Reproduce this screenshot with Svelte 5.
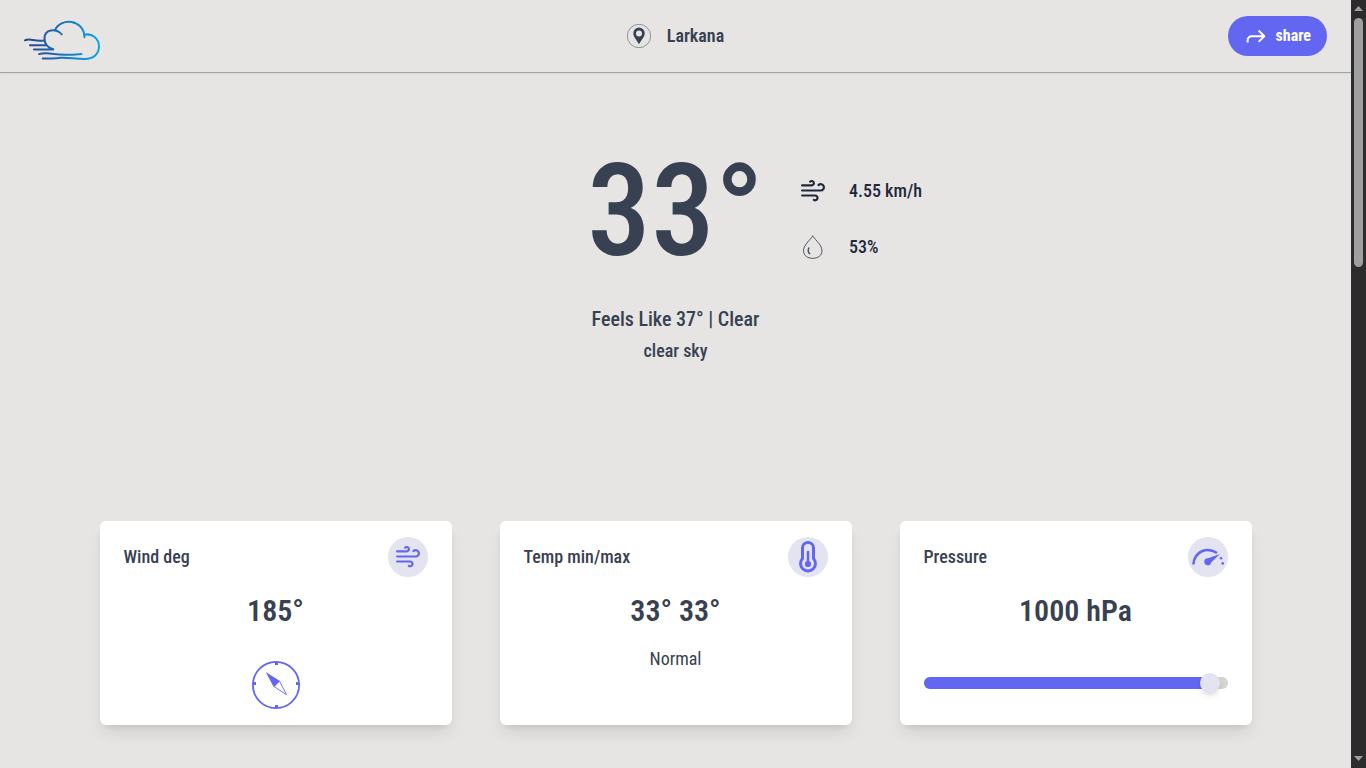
<script>
  const cards = [
    { title: 'Wind deg', value: '185°', icon: 'wind' },
    { title: 'Temp min/max', value: '33° 33°', icon: 'temp' },
    { title: 'Pressure', value: '1000 hPa', icon: 'gauge' }
  ];
  const level = 94.2;
</script>

{#snippet wind(size)}
  <svg width={size} height={size} viewBox="0 0 24 24" fill="none" stroke="currentColor" stroke-width="2.2" stroke-linecap="round" stroke-linejoin="round">
    <path d="M1.100 6.400h9.500a2.200 2.200 0 1 0-1.500-3.700" />
    <path d="M1.100 11.500h18.600a3.150 3.150 0 1 0-2.200-5.400" />
    <path d="M1.100 16.500h12.700a2.400 2.400 0 1 1-1 4.400" />
  </svg>
{/snippet}

<div class="window">
  <div class="page">
    <header>
      <div class="side">
        <svg class="logo" width="78" height="40" viewBox="0 0 78 40" fill="none" stroke="url(#sky)" stroke-width="2" stroke-linecap="round">
          <defs>
            <linearGradient id="sky" gradientUnits="userSpaceOnUse" x1="0" y1="0" x2="76" y2="0">
              <stop offset="0" stop-color="#293d90" />
              <stop offset="0.5" stop-color="#1c72bb" />
              <stop offset="1" stop-color="#05a9e8" />
            </linearGradient>
          </defs>
          <path d="M1 20.300c5-2.500 9 1.500 19 .2" />
          <path d="M6 25.200h15.500" />
          <path d="M10 29.400h20c-5-1.200-9.500-4.500-9.500-11 0-9 11-10.500 17.300-4" />
          <path d="M31 10.300c5-12.700 29-11.700 29.500 7" />
          <path d="M60.500 14.800c7.500-2 14.500 4 14.500 11.500 0 7.500-5.300 12.700-14.300 12.700-10 0-16-1.600-24-1.200-5 .3-9 1.200-18 .7" />
          <path d="M15 34.100c5-1.300 10-.8 15 0 9 1.400 18 .8 27.500-.2" />
        </svg>
      </div>
      <div class="place">
        <svg width="24" height="24" viewBox="0 0 24 24">
          <circle cx="12" cy="12" r="11.700" fill="none" stroke="#374151" stroke-width=".5" />
          <path fill="#374151" fill-rule="evenodd" d="M12 3.500a5.700 5.700 0 0 0-5.700 5.700c0 4 3.300 6.500 5.700 11 2.400-4.500 5.700-7 5.700-11A5.700 5.700 0 0 0 12 3.500zm0 2.900a3 3 0 1 1 0 6 3 3 0 0 1 0-6z" />
        </svg>
        <span>Larkana</span>
      </div>
      <div class="side end">
        <button>
          <svg width="24" height="24" viewBox="0 0 24 24" fill="none" stroke="currentColor" stroke-width="2" stroke-linejoin="round">
            <path d="M3.600 18.500v-2.300a4 4 0 0 1 4-4H20" />
            <path d="M14.600 6.500l5.700 5.700-5.700 5.700" />
          </svg>
          <span>share</span>
        </button>
      </div>
    </header>

    <main>
      <section class="now">
        <div class="reading">
          <h1>33°</h1>
          <ul>
            <li>{@render wind(24)}<span>4.55 km/h</span></li>
            <li>
              <svg width="24" height="24" viewBox="0 0 24 24" fill="none" stroke="#4b5563" stroke-width="1" stroke-linecap="round">
                <path d="M11.700 1.200C8.300 5.700 2.500 10.500 2.500 15.700c0 5 4.200 7.600 9.300 7.600s9.200-2.800 9.200-7.600c0-5.200-5.700-10-9.300-14.500z" />
                <path d="M7.800 13c-.9 2-.7 4.200.9 5.800" stroke-width="1.500" />
              </svg>
              <span>53%</span>
            </li>
          </ul>
        </div>
        <p class="feels">Feels Like 37° | Clear</p>
        <p class="sky">clear sky</p>
      </section>

      <section class="cards">
        {#each cards as card}
          <article>
            <div class="top">
              <h2>{card.title}</h2>
              <div class="badge">
                {#if card.icon === 'wind'}
                  {@render wind(24)}
                {:else if card.icon === 'temp'}
                  <svg width="32" height="32" viewBox="0 0 32 32" fill="none" stroke="currentColor">
                    <path stroke-width="3" d="M10.500 17.500V7a5.500 5.500 0 0 1 11 0v10.500c1.500 1.600 2 3.300 2 5a7.500 7.500 0 0 1-15 0c0-1.700.5-3.400 2-5z" />
                    <path stroke-width="2.600" stroke-linecap="round" d="M16 11v11" />
                    <circle cx="16" cy="23" r="3.100" fill="currentColor" stroke="none" />
                  </svg>
                {:else}
                  <svg width="32" height="32" viewBox="0 0 32 32" fill="none" stroke="currentColor">
                    <path stroke-width="2.600" d="M1.300 23.500C2.500 10 15 5.500 25 12" />
                    <path fill="currentColor" stroke="none" d="M28 13l-8.800 8.400a3.500 3.500 0 1 1-3.200-4.200z" />
                    <g fill="currentColor" stroke="none">
                      <circle cx="29" cy="17.200" r="1.300" />
                      <circle cx="30.700" cy="22.400" r="1.300" />
                    </g>
                  </svg>
                {/if}
              </div>
            </div>
            <strong>{card.value}</strong>
            {#if card.icon === 'wind'}
              <svg class="compass" width="48" height="48" viewBox="0 0 48 48" fill="none" stroke="currentColor">
                <circle cx="24" cy="24" r="23.100" stroke-width="1.800" />
                <path stroke-width="3" d="M24.500 1v3M24.500 44v3M1 22.500h3M44 22.500h3" />
                <path fill="currentColor" stroke="none" d="M13.700 11l14.300 9-6.300 6z" />
                <path stroke-width=".9" d="M27.500 20l7 13.700L22 25.500z" />
              </svg>
            {:else if card.icon === 'temp'}
              <p>Normal</p>
            {:else}
              <div class="track">
                <div class="fill" style="width: {level}%"><i></i></div>
              </div>
            {/if}
          </article>
        {/each}
      </section>
    </main>
  </div>

  <div class="scrollbar">
    <svg width="15" height="18" viewBox="0 0 15 18"><path fill="#a0a0a0" d="M3 11l4.500-5 4.500 5z" /></svg>
    <div class="thumb"></div>
    <svg width="15" height="17" viewBox="0 0 15 17"><path fill="#a0a0a0" d="M3 5h9l-4.500 5z" /></svg>
  </div>
</div>

<style>
  :global(body) { margin: 0; overflow: hidden; }
  .window {
    display: flex;
    height: 768px;
    overflow: hidden;
    background: #e7e5e4;
    color: #374151;
    font-family: 'Roboto Condensed', Roboto, sans-serif;
    font-stretch: 75%;
    font-size: 18px;
    line-height: 28px;
    font-weight: 500;
  }
  svg { display: block; flex: none; }
  h1, h2, p, ul { margin: 0; padding: 0; list-style: none; }
  .page { flex: 1; min-width: 0; }
  header {
    display: flex;
    align-items: center;
    box-sizing: border-box;
    height: 73px;
    padding: 0 24px;
    border-bottom: 1px solid #a3a3a3;
    box-shadow: 0 1px 2px rgba(0, 0, 0, .05);
  }
  .side { flex: 1; display: flex; }
  .logo { margin-top: 7px; }
  .end { justify-content: flex-end; }
  .place { display: flex; align-items: center; gap: 16px; font-weight: 600; }
  button {
    display: flex;
    align-items: center;
    gap: 8px;
    height: 40px;
    padding: 0 16px;
    border: 0;
    border-radius: 20px;
    background: #6366f1;
    color: #fff;
    font: inherit;
    font-weight: 700;
    font-size: 16px;
  }
  .now {
    display: flex;
    flex-direction: column;
    align-items: center;
    height: 448px;
    box-sizing: border-box;
    padding-top: 74px;
  }
  .reading { display: grid; grid-template-columns: 1fr auto 1fr; align-items: center; width: 100%; }
  h1 { grid-column: 2; font-size: 128px; line-height: 128px; font-weight: 500; }
  ul { display: flex; flex-direction: column; gap: 28px; padding: 16px 0 0 37px; color: #1e293b; }
  li { display: flex; align-items: center; gap: 24px; }
  .feels { margin-top: 30px; font-size: 20px; }
  .sky { margin-top: 4px; }
  .cards { display: grid; grid-template-columns: repeat(3, 352px); gap: 48px; justify-content: center; }
  article {
    display: flex;
    flex-direction: column;
    align-items: center;
    box-sizing: border-box;
    height: 204px;
    padding: 16px 24px;
    border-radius: 6px;
    background: #fff;
    box-shadow: 0 10px 15px -3px rgba(0, 0, 0, .1), 0 4px 6px -4px rgba(0, 0, 0, .1);
  }
  .top { display: flex; justify-content: space-between; align-items: center; width: 100%; }
  h2 { font-size: 18px; line-height: 28px; font-weight: 500; }
  .badge {
    display: grid;
    place-items: center;
    width: 40px;
    height: 40px;
    border-radius: 50%;
    background: #e4e4f1;
    color: #6366f1;
  }
  strong { margin-top: 16px; font-size: 30px; line-height: 36px; font-weight: 600; }
  article p { margin-top: 16px; font-weight: 400; }
  .compass { margin-top: 32px; color: #6366f1; }
  .track { width: 100%; height: 12px; margin-top: 48px; border-radius: 6px; background: #d6d3d1; }
  .fill {
    display: flex;
    align-items: center;
    justify-content: flex-end;
    height: 12px;
    border-radius: 6px;
    background: #6366f1;
  }
  i {
    flex: none;
    width: 20px;
    height: 20px;
    margin-right: -10px;
    border-radius: 50%;
    background: #e4e4f1;
    box-shadow: 0 4px 6px -1px rgba(0, 0, 0, .1), 0 2px 4px -2px rgba(0, 0, 0, .1);
  }
  .scrollbar { display: flex; flex-direction: column; width: 15px; background: #2c2c2c; }
  .thumb { width: 9px; height: 249px; margin: 0 3px auto; border-radius: 5px; background: #9f9f9f; }
</style>
